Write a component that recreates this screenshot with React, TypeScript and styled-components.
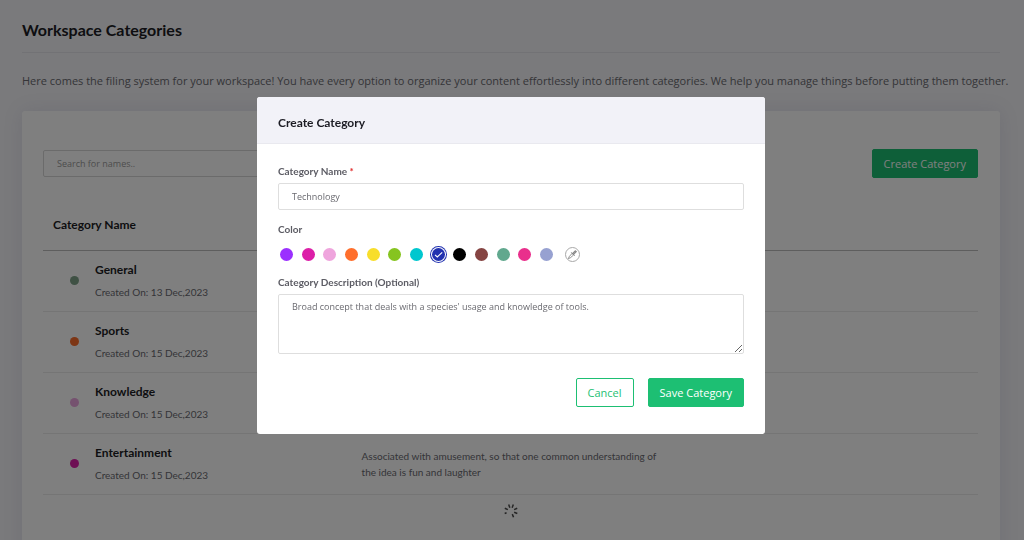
import React, { useState } from "react";
import styled, { createGlobalStyle } from "styled-components";

const wideFont = `"Open Sans", Lato, sans-serif`;

const GlobalStyle = createGlobalStyle`
  *, *::before, *::after { box-sizing: border-box; }
  body {
    margin: 0;
    background: #f4f4f8;
    color: #6a6a70;
    font-family: Lato, "Open Sans", sans-serif;
    font-size: 12px;
  }
  h1, h2, h3, p { margin: 0; }
  button, input, textarea { font: inherit; }
`;

const Page = styled.main`
  height: 100vh;
  overflow: hidden;
  padding: 0 24px 0 22px;
`;

const PageTitle = styled.h1`
  padding: 20px 0 12px;
  border-bottom: 1px solid #e4e4ea;
  color: #1c1c24;
  font-size: 16px;
  font-weight: 700;
  line-height: 20px;
`;

const Intro = styled.p`
  padding: 18px 0 20px;
  font-family: ${wideFont};
  font-size: 11px;
  line-height: 20px;
  white-space: nowrap;
`;

const Card = styled.section`
  min-height: 100vh;
  padding: 38px 22px 24px 21px;
  border-radius: 3px;
  background: #fff;
  box-shadow: 0 0 20px rgba(90, 80, 140, 0.12);
`;

const Toolbar = styled.div`
  display: flex;
  align-items: center;
  justify-content: space-between;
`;

const SearchInput = styled.input`
  width: 260px;
  height: 27px;
  padding: 0 13px;
  border: 1px solid #d6d6d6;
  border-radius: 2px;
  background: #fff;
  font-family: ${wideFont};
  font-size: 9px;
  &::placeholder { color: #9a9a9a; opacity: 1; }
`;

const Button = styled.button<{ $outline?: boolean }>`
  height: 29px;
  padding: 0 11px;
  border: 1px solid #1dbf73;
  border-radius: 2px;
  background: ${(p) => (p.$outline ? "#fff" : "#1dbf73")};
  color: ${(p) => (p.$outline ? "#1dbf73" : "#fff")};
  font-family: ${wideFont};
  font-size: 11px;
  line-height: 16px;
  cursor: pointer;
`;

const Table = styled.table`
  width: 100%;
  border-collapse: collapse;
  table-layout: fixed;
  margin-top: 20px;
`;

const HeadCell = styled.th<{ $width?: string }>`
  width: ${(p) => p.$width ?? "auto"};
  height: 52px;
  padding: 2px 10px 0;
  border-bottom: 1px solid #bdbdbd;
  color: #1c1c24;
  font-size: 12px;
  font-weight: 700;
  text-align: left;
`;

const Cell = styled.td`
  height: 61px;
  padding: 0 10px;
  border-bottom: 1px solid #ebebeb;
  font-size: 10px;
  line-height: 16px;
`;

const Category = styled.div`
  display: flex;
  align-items: center;
  gap: 16px;
  padding-left: 17px;
`;

const Dot = styled.span<{ $color: string }>`
  width: 9px;
  height: 9px;
  border-radius: 50%;
  background: ${(p) => p.$color};
`;

const CategoryName = styled.h3`
  color: #1c1c24;
  font-size: 12px;
  font-weight: 700;
  line-height: 16px;
`;

const Created = styled.p`
  margin-top: 6px;
  font-size: 10px;
  line-height: 16px;
`;

const SpinnerRow = styled.div`
  display: flex;
  justify-content: center;
  padding-top: 8px;
`;

const Overlay = styled.div`
  position: fixed;
  inset: 0;
  display: flex;
  align-items: flex-start;
  justify-content: center;
  padding: 97px 2px 0 0;
  background: rgba(0, 0, 0, 0.5);
`;

const Modal = styled.form`
  width: 100%;
  max-width: 508px;
  border-radius: 3px;
  background: #fff;
  overflow: hidden;
`;

const ModalHeader = styled.header`
  padding: 18px 21px 12px;
  border-bottom: 1px solid #e9e9ef;
  background: #f2f2f8;
`;

const ModalTitle = styled.h2`
  color: #1c1c24;
  font-size: 12px;
  font-weight: 700;
  line-height: 16px;
`;

const ModalBody = styled.div`
  display: flex;
  flex-direction: column;
  padding: 19px 21px 27px;
`;

const Label = styled.label`
  display: block;
  color: #5c5c64;
  font-size: 10px;
  font-weight: 700;
  line-height: 16px;
`;

const Legend = styled(Label).attrs({ as: "legend" })`
  padding: 0;
`;

const Required = styled.span`
  color: #e02b2b;
`;

const TextInput = styled.input`
  width: 100%;
  height: 27px;
  margin: 4px 0 11px;
  padding: 0 13px;
  border: 1px solid #dedede;
  border-radius: 2px;
  color: #6a6a70;
  font-family: ${wideFont};
  font-size: 9px;
`;

const TextArea = styled.textarea`
  width: 100%;
  height: 60px;
  margin: 4px 0 24px;
  padding: 4px 13px;
  border: 1px solid #dedede;
  border-radius: 2px;
  color: #6a6a70;
  font-family: ${wideFont};
  font-size: 9px;
  line-height: 16px;
  resize: both;
`;

const ColorField = styled.fieldset`
  margin: 0 0 12px;
  padding: 0;
  border: 0;
`;

const ColorRow = styled.div`
  display: flex;
  align-items: center;
  gap: 12px;
  height: 16px;
  margin-top: 9px;
  padding-left: 2px;
`;

const Swatches = styled.div`
  display: flex;
  justify-content: space-between;
  width: 273px;
`;

const Swatch = styled.label`
  position: relative;
  display: flex;
  svg { position: absolute; top: 0; left: 0; }
`;

const SwatchInput = styled.input<{ $color: string }>`
  appearance: none;
  width: 13px;
  height: 13px;
  margin: 0;
  border-radius: 50%;
  background: ${(p) => p.$color};
  cursor: pointer;
  &:checked { box-shadow: 0 0 0 1px #fff, 0 0 0 2px ${(p) => p.$color}; }
`;

const PickerButton = styled.button`
  display: flex;
  align-items: center;
  justify-content: center;
  width: 15px;
  height: 15px;
  padding: 0;
  border: 1px solid #a8a8a8;
  border-radius: 50%;
  background: #fff;
  cursor: pointer;
`;

const Actions = styled.footer`
  display: flex;
  justify-content: flex-end;
  gap: 14px;
`;

const categories = [
  { name: "General", date: "13 Dec,2023", color: "#7fa389", text: "" },
  { name: "Sports", date: "15 Dec,2023", color: "#fb6d2a", text: "" },
  { name: "Knowledge", date: "15 Dec,2023", color: "#eba4df", text: "" },
  {
    name: "Entertainment",
    date: "15 Dec,2023",
    color: "#dc1fa8",
    text: "Associated with amusement, so that one common understanding of the idea is fun and laughter",
  },
];

const colors = [
  "#9b30ff", "#dc1fa8", "#efa5dd", "#ff6f2c", "#f8de2b", "#86c420", "#00c7cf",
  "#2232b0", "#000000", "#854442", "#61a88e", "#e92f8c", "#97a1d1",
];

const Check = () => (
  <svg width="13" height="13" viewBox="0 0 13 13" fill="none" stroke="#fff" strokeWidth="1.1" aria-hidden="true">
    <path d="M3 6.900 5.300 9 10.200 4.300" />
  </svg>
);

const Dropper = () => (
  <svg width="11" height="11" viewBox="0 0 11 11" fill="none" stroke="#777" strokeWidth="0.8" strokeLinejoin="round" aria-hidden="true">
    <path d="M1.400 9.600 2.200 7.700 5 4.400 6.600 6 3.300 8.800Z" />
    <path d="M4.400 3.500 7.500 6.600" strokeLinecap="round" />
    <path d="M5.700 4.100 7.400 2.300C8 1.700 8.800 1.700 9.200 2.100S9.300 3.100 8.700 3.700L6.900 5.300Z" fill="#999" />
  </svg>
);

const Spinner = () => (
  <svg width="16" height="16" viewBox="0 0 16 16" stroke="#4a4a4a" strokeWidth="1.500" role="img" aria-label="Loading">
    {[20, 66, 112, 158, 248, 294, 340].map((a) => (
      <line key={a} x1="8" y1="1.200" x2="8" y2={a === 248 ? 3.2 : 4.6} transform={`rotate(${a} 8 8)`} />
    ))}
  </svg>
);

export default function App() {
  const [selected, setSelected] = useState("#2232b0");
  return (
    <>
      <GlobalStyle />
      <Page>
        <PageTitle>Workspace Categories</PageTitle>
        <Intro>
          Here comes the filing system for your workspace! You have every option to organize your content effortlessly
          into different categories. We help you manage things before putting them together.
        </Intro>
        <Card>
          <Toolbar>
            <SearchInput type="search" placeholder="Search for names.." aria-label="Search for names" />
            <Button type="button">Create Category</Button>
          </Toolbar>
          <Table>
            <thead>
              <tr>
                <HeadCell $width="33%">Category Name</HeadCell>
                <HeadCell $width="34%" />
                <HeadCell />
              </tr>
            </thead>
            <tbody>
              {categories.map((c) => (
                <tr key={c.name}>
                  <Cell>
                    <Category>
                      <Dot $color={c.color} />
                      <div>
                        <CategoryName>{c.name}</CategoryName>
                        <Created>Created On: {c.date}</Created>
                      </div>
                    </Category>
                  </Cell>
                  <Cell>{c.text}</Cell>
                  <Cell />
                </tr>
              ))}
            </tbody>
          </Table>
          <SpinnerRow>
            <Spinner />
          </SpinnerRow>
        </Card>
      </Page>
      <Overlay>
        <Modal role="dialog" aria-labelledby="modal-title" onSubmit={(e) => e.preventDefault()}>
          <ModalHeader>
            <ModalTitle id="modal-title">Create Category</ModalTitle>
          </ModalHeader>
          <ModalBody>
            <Label htmlFor="name">
              Category Name <Required>*</Required>
            </Label>
            <TextInput id="name" defaultValue="Technology" />
            <ColorField>
              <Legend>Color</Legend>
              <ColorRow>
                <Swatches>
                  {colors.map((c) => (
                    <Swatch key={c}>
                      <SwatchInput
                        type="radio"
                        name="color"
                        aria-label={c}
                        $color={c}
                        checked={selected === c}
                        onChange={() => setSelected(c)}
                      />
                      {selected === c && <Check />}
                    </Swatch>
                  ))}
                </Swatches>
                <PickerButton type="button" aria-label="Pick a color">
                  <Dropper />
                </PickerButton>
              </ColorRow>
            </ColorField>
            <Label htmlFor="description">Category Description (Optional)</Label>
            <TextArea
              id="description"
              defaultValue="Broad concept that deals with a species' usage and knowledge of tools."
            />
            <Actions>
              <Button type="button" $outline>Cancel</Button>
              <Button type="submit">Save Category</Button>
            </Actions>
          </ModalBody>
        </Modal>
      </Overlay>
    </>
  );
}
